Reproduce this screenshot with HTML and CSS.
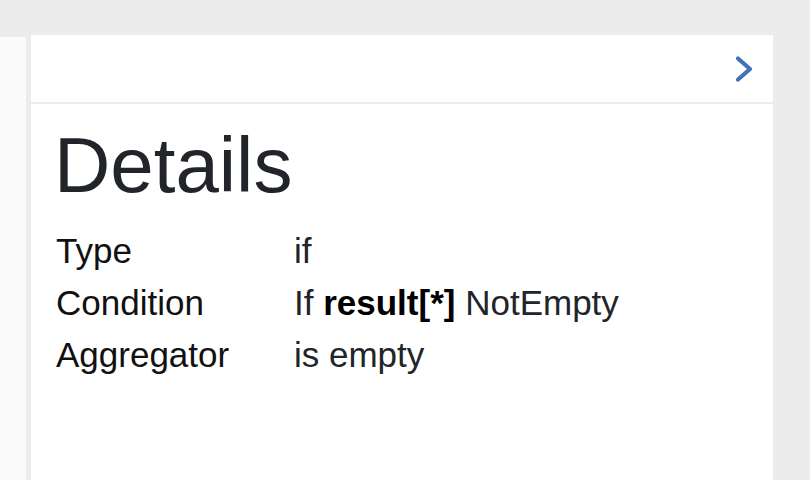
FILE: index.html
```html
<!DOCTYPE html>
<html>
<head>
<meta charset="utf-8">
<link rel="stylesheet" href="styles.css">
</head>
<body>
<div class="layout">
  <aside class="side"></aside>
  <main class="card">
    <div class="card-header">
      <svg class="chev" width="24" height="30" viewBox="0 0 24 30"><path d="M5 4.5 L17 15 L5 25.5" fill="none" stroke="#4372b4" stroke-width="4.2" stroke-linecap="round" stroke-linejoin="round"/></svg>
    </div>
    <div class="card-body">
      <h1 class="title">Details</h1>
      <div class="details">
        <div class="label">Type</div><div class="value">if</div>
        <div class="label">Condition</div><div class="value">If <b>result[*]</b> NotEmpty</div>
        <div class="label">Aggregator</div><div class="value">is empty</div>
      </div>
    </div>
  </main>
</div>
</body>
</html>
```
FILE: styles.css
```css
html, body {
  margin: 0;
  padding: 0;
  height: 100%;
}
body {
  background: #ececec;
  font-family: "Liberation Sans", Arial, sans-serif;
  color: #212529;
}
.layout {
  display: flex;
  gap: 5px;
  padding-top: 35px;
  height: 100%;
  box-sizing: border-box;
}
.side {
  width: 26px;
  margin-top: 2px;
  background: #fafafa;
  flex: none;
}
.card {
  width: 742px;
  background: #fff;
  flex: none;
}
.card-header {
  height: 67px;
  border-bottom: 2px solid #ececec;
  display: flex;
  justify-content: flex-end;
  align-items: center;
  padding-right: 16px;
}
.chev {
  display: block;
}
.card-body {
  padding: 22px 0 0 23px;
}
.title {
  margin: 0;
  font-size: 78px;
  font-weight: 400;
  line-height: 78px;
  color: #212529;
}
.details {
  display: grid;
  grid-template-columns: 238px auto;
  margin: 21px 0 0 2px;
  font-size: 35px;
  line-height: 52px;
}
.label {
  color: #111;
}
.value {
  color: #212529;
}
.value b {
  color: #000;
}
```
